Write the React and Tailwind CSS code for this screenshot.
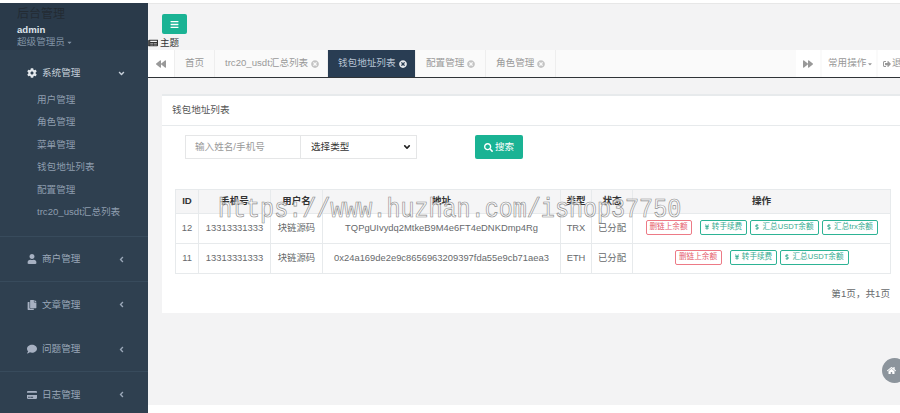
import React from "react";
import { FaCog, FaUser, FaCopy, FaComment, FaCreditCard, FaAngleDown, FaAngleLeft, FaBackward, FaForward, FaTimesCircle, FaSignOutAlt, FaSearch, FaBars, FaHome, FaYenSign, FaDollarSign, FaCaretDown, FaNewspaper } from "react-icons/fa";

const font = { fontFamily: '"Liberation Sans","Noto Sans CJK SC",sans-serif' };

function SubItem({ children }) {
  return <div className="h-[22.4px] pl-[37px] flex items-center">{children}</div>;
}

function NavItem({ icon, label, border }) {
  return (
    <div className={`h-[45px] flex items-center pl-[27px] pr-[22px] ${border ? "border-b border-[#384b5c]" : ""}`}>
      <span className="w-[15px] flex items-center text-[#a7b1c2] text-[10px]">{icon}</span>
      <span className="flex-1 text-[9.6px]">{label}</span>
      <FaAngleLeft className="text-[9px]" />
    </div>
  );
}

function Tab({ children, active, w }) {
  return (
    <div className={`${w} h-full flex items-center pl-[10px] gap-[3px] shrink-0 border-r border-[#eeeeee] ${active ? "bg-[#293d53] text-[#b8c4d4]" : "text-[#999999]"}`}>
      {children}
      <FaTimesCircle className={`text-[8px] ${active ? "text-[#e8eaee]" : "text-[#c4c4c4]"}`} />
    </div>
  );
}

function Btn({ danger, icon, children, w }) {
  return (
    <span className={`${w} h-[15px] inline-flex items-center justify-center gap-[2px] rounded-[2px] border text-[7.6px] bg-white ${danger ? "border-[#ed7a86] text-[#e5606e]" : "border-[#2db395] text-[#35ab90]"}`}>
      {icon}
      {children}
    </span>
  );
}

const th = "border border-[#e7eaec] font-bold text-[#333333] text-[9.6px] p-0 text-center";
const td = "border border-[#e7eaec] text-[#676a6c] text-[9.4px] p-0 text-center";

export default function App() {
  return (
    <div className="relative w-[900px] h-[413px] overflow-hidden bg-white" style={font}>
      <div className="h-[3px] bg-white" />
      <div className="flex h-[402px]">
        <aside className="w-[148px] shrink-0 bg-[#2f4050] text-[#9aa7b8] h-[410px]">
          <div className="h-[47px] bg-[#2a3a4a] pl-[17px] pt-[2px]">
            <div className="text-[12px] leading-[18px] text-[#232b33]">后台管理</div>
            <div className="text-[9.6px] leading-[13px] font-bold text-[#dfe4ea]">admin</div>
            <div className="text-[9.6px] leading-[12px] text-[#8193a5] flex items-center gap-[1px]">超级管理员<FaCaretDown className="text-[7px]" /></div>
          </div>
          <div className="h-[39px] pt-[7px] flex items-center pl-[27px] pr-[22px] text-[#c7d0da]">
            <FaCog className="text-[#e4e8ec] text-[10px] w-[15px] pr-[5px]" />
            <span className="flex-1 text-[9.6px]">系统管理</span>
            <FaAngleDown className="text-[9px]" />
          </div>
          <div className="text-[9.6px] text-[#8e9dae] pb-[13px] border-b border-[#384b5c]">
            <SubItem>用户管理</SubItem>
            <SubItem>角色管理</SubItem>
            <SubItem>菜单管理</SubItem>
            <SubItem>钱包地址列表</SubItem>
            <SubItem>配置管理</SubItem>
            <SubItem>trc20_usdt汇总列表</SubItem>
          </div>
          <NavItem icon={<FaUser />} label="商户管理" border />
          <NavItem icon={<FaCopy />} label="文章管理" />
          <NavItem icon={<FaComment />} label="问题管理" border />
          <NavItem icon={<FaCreditCard />} label="日志管理" />
        </aside>

        <main className="flex-1 min-w-0 bg-[#f3f3f4] border-t border-[#e7e7e7] flex flex-col">
          <div className="h-[46px] shrink-0 relative">
            <div className="ml-[14px] mt-[10px] w-[25px] h-[20px] rounded-[2px] bg-[#1ab394] flex items-center justify-center text-white text-[9px]">
              <FaBars />
            </div>
            <div className="flex items-center gap-[2px] text-[9.6px] text-[#333333] leading-[12px] mt-[3px]">
              <FaNewspaper className="text-[10px]" />主题
            </div>
          </div>
          <div className="h-[28px] shrink-0 flex items-stretch bg-[#fafafa] border-b border-[#2f3337] text-[9.6px] w-[760px]">
            <div className="w-[27px] bg-white flex items-center justify-center text-[#999999] text-[10px] border-r border-[#eeeeee]"><FaBackward /></div>
            <div className="w-[40px] flex items-center pl-[10px] text-[#999999] border-r border-[#eeeeee]">首页</div>
            <Tab w="w-[113px]">trc20_usdt汇总列表</Tab>
            <Tab w="w-[88px]" active>钱包地址列表</Tab>
            <Tab w="w-[70px]">配置管理</Tab>
            <Tab w="w-[70px]">角色管理</Tab>
            <div className="flex-1" />
            <div className="w-[24px] bg-white flex items-center justify-center text-[#999999] text-[10px]"><FaForward /></div>
            <div className="w-[2px]" />
            <div className="w-[54px] bg-white flex items-center pl-[6px] text-[#999999] gap-[1px] shrink-0">常用操作<FaCaretDown className="text-[6px]" /></div>
            <div className="w-[2px] shrink-0" />
            <div className="w-[30px] bg-white flex items-center pl-[5px] text-[#999999] gap-[1px] shrink-0 whitespace-nowrap"><FaSignOutAlt className="text-[8px] shrink-0" />退出</div>
          </div>
          <div className="ml-[14px] mt-[16px] w-[738px] h-[219px] shrink-0 bg-white border-t-[2px] border-[#e7eaec]">
            <div className="h-[30px] border-b border-[#e7eaec] pl-[10px] flex items-center text-[9.6px] text-[#555555]">钱包地址列表</div>
            <div className="flex mt-[9px] ml-[23px] h-[24px]">
              <div className="w-[116px] border border-[#e5e6e7] flex items-center pl-[9px] text-[9.6px] text-[#999999]">输入姓名/手机号</div>
              <div className="w-[116px] border-y border-r border-[#e5e6e7] flex items-center pl-[10px] pr-[4px] text-[9.6px] text-[#333333]">
                <span className="flex-1">选择类型</span>
                <FaAngleDown className="text-[10px] text-[#222222]" />
              </div>
              <div className="ml-[58px] w-[48px] rounded-[2px] bg-[#1ab394] flex items-center justify-center gap-[2px] text-white text-[9.6px]">
                <FaSearch className="text-[9px]" />搜索
              </div>
            </div>
            <table className="ml-[13px] mt-[30px] w-[715px] table-fixed border-collapse">
              <colgroup>
                <col className="w-[23px]" /><col className="w-[72px]" /><col className="w-[52px]" /><col className="w-[238px]" /><col className="w-[31px]" /><col className="w-[41px]" /><col className="w-[258px]" />
              </colgroup>
              <thead>
                <tr className="h-[24px] bg-[#f5f5f6]">
                  <th className={th}>ID</th><th className={th}>手机号</th><th className={th}>用户名</th><th className={th}>地址</th><th className={th}>类型</th><th className={th}>状态</th><th className={th}>操作</th>
                </tr>
              </thead>
              <tbody>
                <tr className="h-[30px]">
                  <td className={td}>12</td><td className={td}>13313331333</td><td className={td}>块链源码</td>
                  <td className={td}>TQPgUIvydq2MtkeB9M4e6FT4eDNKDmp4Rg</td><td className={td}>TRX</td><td className={td}>已分配</td>
                  <td className={td}>
                    <div className="flex items-center justify-center -mt-[3px]">
                      <Btn danger w="w-[46px]">删链上余额</Btn>
                      <span className="w-[8px]" />
                      <Btn w="w-[47px]" icon={<FaYenSign className="text-[6px]" />}>转手续费</Btn>
                      <span className="w-[3px]" />
                      <Btn w="w-[69px]" icon={<FaDollarSign className="text-[6px]" />}>汇总USDT余额</Btn>
                      <span className="w-[3px]" />
                      <Btn w="w-[56px]" icon={<FaDollarSign className="text-[6px]" />}>汇总trx余额</Btn>
                    </div>
                  </td>
                </tr>
                <tr className="h-[30px]">
                  <td className={td}>11</td><td className={td}>13313331333</td><td className={td}>块链源码</td>
                  <td className={td}>0x24a169de2e9c8656963209397fda55e9cb71aea3</td><td className={td}>ETH</td><td className={td}>已分配</td>
                  <td className={td}>
                    <div className="flex items-center justify-center -mt-[3px]">
                      <Btn danger w="w-[47px]">删链上余额</Btn>
                      <span className="w-[8px]" />
                      <Btn w="w-[47px]" icon={<FaYenSign className="text-[6px]" />}>转手续费</Btn>
                      <span className="w-[3px]" />
                      <Btn w="w-[69px]" icon={<FaDollarSign className="text-[6px]" />}>汇总USDT余额</Btn>
                    </div>
                  </td>
                </tr>
              </tbody>
            </table>
            <div className="mt-[13px] w-[728px] text-right text-[9.6px] text-[#676a6c]">第1页，共1页</div>
          </div>
        </main>
      </div>
      <div className="absolute left-[218px] top-[195px] origin-center scale-y-[1.2] text-[23.4px] leading-[30px] font-normal whitespace-nowrap text-white/70 [-webkit-text-stroke:0.6px_#8c8c8c] pointer-events-none" style={{ fontFamily: '"Liberation Mono",monospace' }}>https://www.huzhan.com/ishop37750</div>
      <div className="absolute left-[882px] top-[358px] w-[25px] h-[25px] rounded-full bg-[#8c949c] flex items-center pl-[5px] text-white text-[9px]"><FaHome /></div>
    </div>
  );
}
